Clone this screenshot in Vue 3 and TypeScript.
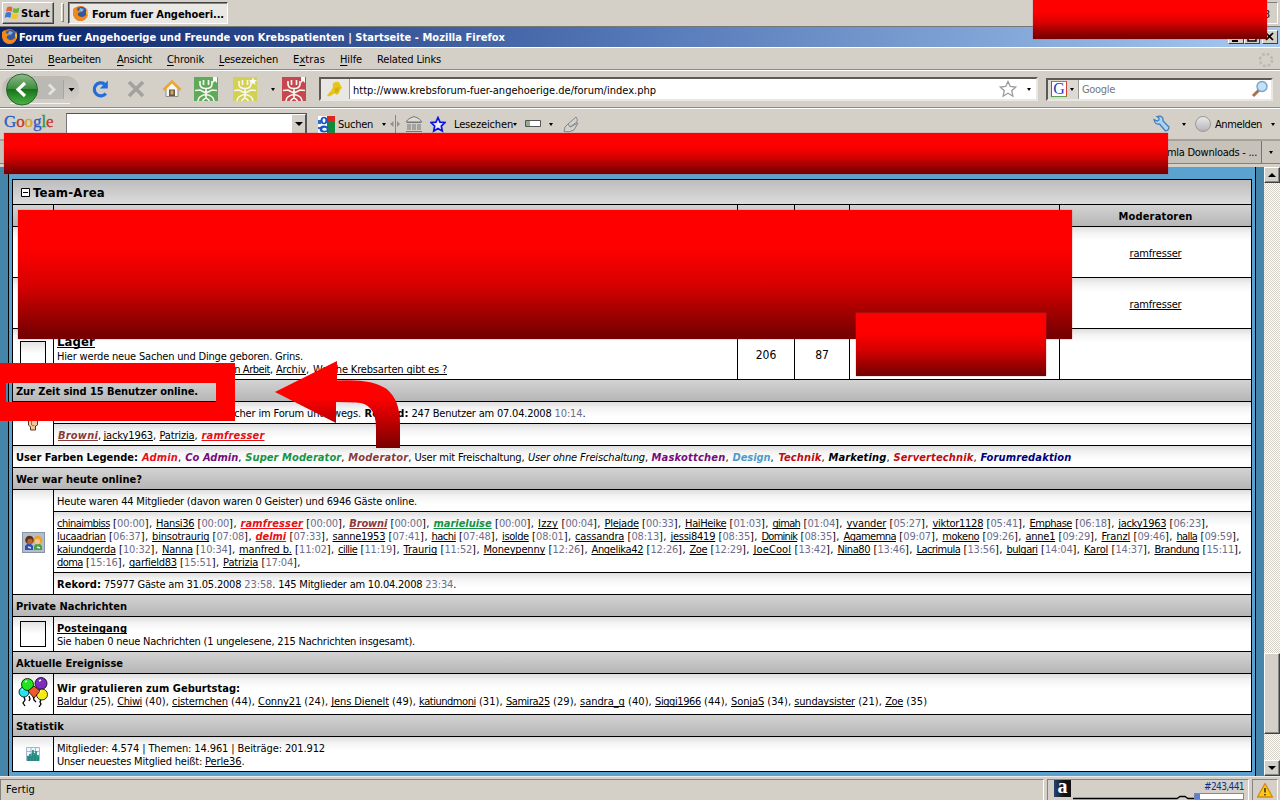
<script setup lang="ts">
import type { Directive } from 'vue'

type Seg = [text: string, width: number, cls?: string]

// Spreads the letters so that a run of text takes exactly the given width.
const vFit: Directive<HTMLElement, number> = {
  mounted(el, binding) {
    const count = (el.textContent || '').length
    if (!count || !binding.value) return
    const range = document.createRange()
    range.selectNodeContents(el)
    const natural = range.getBoundingClientRect().width
    el.style.letterSpacing = `${(binding.value - natural) / count}px`
  },
}

const menu: [string, string, string, number, number][] = [
  ['', 'D', 'atei', 26, 15],
  ['', 'B', 'earbeiten', 53, 16],
  ['', 'A', 'nsicht', 35, 15],
  ['', 'C', 'hronik', 37, 15],
  ['', 'L', 'esezeichen', 59, 15],
  ['E', 'x', 'tras', 32, 15],
  ['', 'H', 'ilfe', 22, 15],
  ['Related Links', '', '', 64, 0],
]

type Entry = [name: string, extra: string, next: number, cls?: string]

// Each entry runs up to the x position where the following one starts.
const stamped = (list: Entry[]): Seg[] => {
  let x = 57.5
  return list.flatMap(([name, time, next, cls]) => {
    const width = next - x - 46.3
    x = next
    return [[name, width, 'lnk ' + (cls || '')], [' [', 7.3], [time, 27.6, 'time'], ['], ', 11.4]] as Seg[]
  })
}
const aged = (list: Entry[]): Seg[] => {
  let x = 57.5
  return list.flatMap(([name, age, next]) => {
    const width = next - x - 30.2
    x = next
    return [[name, width, 'lnk'], [` (${age}), `, 30.2]] as Seg[]
  })
}

const visitors: Seg[][] = [
  stamped([
    ['chinaimbiss', '00:00', 156.6], ['Hansi36', '00:00', 241], ['ramfresser', '00:00', 349.8, 'bi red'],
    ['Browni', '00:00', 434, 'bi brown'], ['marieluise', '00:00', 538.5, 'bi green'], ['Izzy', '00:04', 605],
    ['Plejade', '00:33', 685.6], ['HaiHeike', '01:03', 773], ['gimah', '01:04', 847], ['yvander', '05:27', 933],
    ['viktor1128', '05:41', 1030], ['Emphase', '06:18', 1118.8], ['jacky1963', '06:23', 1213],
  ]),
  stamped([
    ['lucaadrian', '06:37', 152.6], ['binsotraurig', '07:08', 256], ['delmi', '07:33', 333, 'bi red'],
    ['sanne1953', '07:41', 432], ['hachi', '07:48', 502.6], ['isolde', '08:01', 575.6], ['cassandra', '08:13', 671],
    ['jessi8419', '08:35', 762], ['Dominik', '08:35', 844], ['Agamemna', '09:07', 942.8], ['mokeno', '09:26', 1026],
    ['anne1', '09:29', 1102], ['Franzl', '09:46', 1177], ['halla', '09:59', 1244],
  ]),
  stamped([
    ['kaiundgerda', '10:32', 162.5], ['Nanna', '10:34', 239.6], ['manfred b.', '11:02', 338.6], ['cillie', '11:19', 404],
    ['Traurig', '11:52', 484], ['Moneypenny', '12:26', 592], ['Angelika42', '12:26', 690], ['Zoe', '12:29', 754],
    ['JoeCool', '13:42', 838], ['Nina80', '13:46', 917], ['Lacrimula', '13:56', 1007], ['bulgari', '14:04', 1084.5],
    ['Karol', '14:37', 1155], ['Brandung', '15:11', 1246],
  ]),
  stamped([['doma', '15:16', 129.6], ['garfield83', '15:51', 223.6], ['Patrizia', '17:04', 305]]),
]

const birthdays: Seg[] = [
  ...aged([
    ['Baldur', '25', 117.8], ['Chiwi', '40', 172.6], ['cjsternchen', '44', 258.6], ['Conny21', '24', 331.8],
    ['Jens Dienelt', '49', 419.6], ['katiundmoni', '31', 506.4], ['Samira25', '29', 580.5], ['sandra_g', '40', 655.5],
    ['Siggi1966', '44', 731.5], ['SonjaS', '34', 794.8], ['sundaysister', '21', 885.6],
  ]),
  ['Zoe', 18, 'lnk'], [' (35)', 24],
]

const online: Seg[] = [
  ['Browni', 40, 'lnk bi brown'], [', ', 5.5], ['jacky1963', 49.5, 'lnk'], [', ', 6.5], ['Patrizia', 35, 'lnk'],
  [', ', 7], ['ramfresser', 63, 'lnk bi red'],
]
const legend: Seg[] = [
  ['User Farben Legende:', 122, 'b'], [' ', 4], ['Admin', 36, 'bi red'], [', ', 7.3], ['Co Admin', 53, 'bi purple'], [', ', 7],
  ['Super Moderator', 96, 'bi green'], [', ', 7], ['Moderator', 60, 'bi brown'], [', ', 6.2], ['User mit Freischaltung', 107],
  [', ', 6.5], ['User ohne Freischaltung', 117, 'i'], [', ', 6.5], ['Maskottchen', 74, 'bi purple'], [', ', 7], ['Design', 38, 'bi sky'],
  [', ', 8], ['Technik', 43, 'bi crimson'], [', ', 7], ['Marketing', 58, 'bi'], [', ', 7], ['Servertechnik', 80, 'bi crimson'],
  [', ', 7], ['Forumredaktion', 91, 'bi navy'],
]
const record: Seg[] = [
  ['Rekord:', 44, 'b'], [' 75977 Gäste am 31.05.2008 ', 143.3], ['23:58', 28, 'time'],
  ['. 145 Mitglieder am 10.04.2008 ', 153], ['23:34', 28, 'time'], ['.', 3],
]
const current: Seg[] = [
  ['ucher im Forum unterwegs.', 133], [' ', 3.5], ['Rekord:', 44, 'b'], [' 247 Benutzer am 07.04.2008 ', 146],
  ['10:14', 28, 'time'], ['.', 3],
]
const stamps = [
  { cls: 's-green', fill: '#58a755', mark: 'M19 0h4v6l-2-2-2 2z' },
  { cls: 's-yellow', fill: '#d2d24d', mark: 'M20 0l1 3h3l-2.300 2 1 3-2.700-1.800L17.300 8l1-3L16 3h3z' },
  { cls: 's-red', fill: '#c73f49', mark: 'M19 0h4v6l-2-2-2 2z' },
]
</script>

<template>
  <div class="screen">
    <div class="taskbar">
      <div class="start">
        <svg width="17" height="16" viewBox="0 0 17 16"><path d="M3 2.500Q6 .5 8.500 2.500L7.500 7Q4.500 5 2 7z" fill="#e8622c"/><path d="M9.500 3Q12.500 4.500 15.500 2.500L14.500 7.500Q11.500 8.500 8.500 7z" fill="#6fb33a"/><path d="M1.700 8Q4.500 6 7.300 8L6.300 13Q3.300 11 .7 13z" fill="#3c77d4"/><path d="M8.200 8Q11.200 9.500 14.200 8.500L13.200 13.500Q10.200 15 7.200 13z" fill="#f3c42e"/></svg>
        <b v-fit="29">Start</b>
      </div>
      <div class="grip"></div>
      <div class="task">
        <svg class="fox" width="17" height="17" viewBox="0 0 17 17"><circle cx="8.500" cy="8.500" r="7.500" fill="#e06a12"/><circle cx="9.500" cy="7" r="5" fill="#31579f"/><path d="M8 3l4 1-2 3-3-1z" fill="#79b5e6"/><path d="M1 4Q0 15 8 16Q15 16 16 8Q13 13 9 12Q5 11 6 8L9 7L5 5L4 2Q2 3 1 4z" fill="#ee8a1d"/><path d="M15 3Q17 7 15.500 11L14 8z" fill="#f7c23a"/></svg>
        <b v-fit="132">Forum fuer Angehoeri...</b>
      </div>
      <div class="tray">8</div>
    </div>

    <div class="title">
      <svg width="17" height="17" viewBox="0 0 17 17"><circle cx="8.500" cy="8.500" r="7.500" fill="#e06a12"/><circle cx="9.500" cy="7" r="5" fill="#31579f"/><path d="M8 3l4 1-2 3-3-1z" fill="#79b5e6"/><path d="M1 4Q0 15 8 16Q15 16 16 8Q13 13 9 12Q5 11 6 8L9 7L5 5L4 2Q2 3 1 4z" fill="#ee8a1d"/><path d="M15 3Q17 7 15.500 11L14 8z" fill="#f7c23a"/></svg>
      <b v-fit="486">Forum fuer Angehoerige und Freunde von Krebspatienten | Startseite - Mozilla Firefox</b>
      <span class="wins">
        <i><svg width="14" height="14"><path d="M3 10h6" stroke="#000" stroke-width="2"/></svg></i><i><svg width="14" height="14"><path d="M3 3h8v7H3zM3 4h8" fill="none" stroke="#000" stroke-width="1.500"/></svg></i><i class="x"><svg width="14" height="14"><path d="M3 2l7 7M10 2l-7 7" stroke="#000" stroke-width="1.700"/></svg></i>
      </span>
    </div>

    <div class="menubar">
      <span v-for="m in menu" :key="m[0] + m[1]" v-fit="m[3]" :style="{ width: m[3] + 'px', marginRight: m[4] + 'px' }">{{ m[0] }}<u>{{ m[1] }}</u>{{ m[2] }}</span>
      <svg class="throb" width="18" height="18" viewBox="0 0 18 18"><circle cx="9" cy="9" r="6" fill="none" stroke="#bcb9b2" stroke-width="2.600" stroke-dasharray="2.700 2.012"/></svg>
    </div>

    <div class="nav">
      <svg class="history" width="82" height="36" viewBox="0 0 82 36">
        <defs><linearGradient id="gb" x1="0" y1="0" x2="0" y2="1"><stop offset="0" stop-color="#8fb98d"/><stop offset=".48" stop-color="#3d8d3d"/><stop offset=".5" stop-color="#19711b"/><stop offset="1" stop-color="#49b646"/></linearGradient><linearGradient id="pl" x1="0" y1="0" x2="0" y2="1"><stop offset="0" stop-color="#bcb9b2"/><stop offset="1" stop-color="#d3d0c9"/></linearGradient></defs>
        <rect x="2" y="5" width="77" height="27" rx="13" fill="url(#pl)"/><path d="M10 32.500h60" stroke="#f3f2ee"/><path d="M36 8h27v20H36z" fill="#bbb9b3"/><path d="M63.500 9v19" stroke="#a9a69f"/>
        <circle cx="22" cy="18.500" r="15.500" fill="url(#gb)" stroke="#2d6530"/><path d="M25 12l-7 6.500 7 6.500" fill="none" stroke="#fff" stroke-width="3.200"/><path d="M49 13.500l5 5-5 5" fill="none" stroke="#e5e3de" stroke-width="2.800"/><path d="M68.500 17h6l-3 3.500z" fill="#000"/>
      </svg>
      <svg class="ic reload" width="20" height="20" viewBox="0 0 20 20"><path d="M15.800 14.500A6.500 6.500 0 1 1 14.500 5" fill="none" stroke="#1b68d8" stroke-width="3.200"/><path d="M17.800 1.500v8h-8z" fill="#1b68d8"/></svg>
      <svg class="ic stop" width="18" height="18" viewBox="0 0 18 18"><path d="M2 2l14 14M16 2L2 16" stroke="#a09f9b" stroke-width="3.600"/></svg>
      <svg class="ic home" width="20" height="20" viewBox="0 0 20 20"><path d="M4 9v8.500h12V9l-6-6z" fill="#faf9f5" stroke="#8b8b8b"/><path d="M1.500 11L10 2.500l8.500 8.500" fill="none" stroke="#eda42c" stroke-width="2.600"/><path d="M7 10.500h6V17H7z" fill="#5d5147"/><path d="M8.500 11.500h3v4h-3z" fill="#d9a24a"/></svg>
      <template v-for="s in stamps" :key="s.cls">
        <i v-if="s.cls === 's-red'" class="caret stampdrop"></i>
        <svg class="ic" :class="s.cls" width="24" height="24" viewBox="0 0 24 24"><rect width="24" height="24" :fill="s.fill"/><path :d="s.mark" fill="#fff"/><path d="M6 4v3q0 4.500 6 4.500T18 7V4M9.500 3v5M14.500 3v5M12 11v10M1 13.500l5-.5 6 3 6-3 5 .5M4 24q0-5 8-6.500q8 1.500 8 6.500M8.500 24q1-2 3.500-3q2.500 1 3.500 3" fill="none" stroke="#f8faee" stroke-width="1.700"/></svg>
      </template>
      <div class="url">
        <div class="fav"><svg width="20" height="18" viewBox="0 0 20 18"><path d="M2 16Q3 13 6 11L8 7Q7 3 10 2Q14 1 15 4L17 8Q15 9 14 13L12 15Q10 12 7 15Q5 17 2 16z" fill="#e6c51a"/><path d="M10 8l4-1-1 5-3 1z" fill="#d1b010"/></svg></div>
        <span v-fit="303">http://www.krebsforum-fuer-angehoerige.de/forum/index.php</span>
        <svg class="star" width="18" height="18" viewBox="0 0 18 18"><path d="M9 1.500l2.300 5 5.400.5-4 3.700 1.200 5.500L9 13.300l-4.900 2.900 1.200-5.500-4-3.700 5.400-.5z" fill="#fff" stroke="#9b9b9b" stroke-width="1.300"/></svg>
        <i class="caret"></i>
      </div>
      <div class="search">
        <div class="engine"><b>G</b><i class="caret"></i></div>
        <span v-fit="33">Google</span>
        <svg width="18" height="18" viewBox="0 0 18 18"><path d="M2 16l6-6" stroke="#a9714a" stroke-width="3"/><circle cx="11" cy="6.500" r="5" fill="#bfe2f8" stroke="#7ea0c4" stroke-width="1.400"/></svg>
      </div>
    </div>

    <div class="gbar">
      <span class="glogo"><i class="c1">G</i><i class="c2">o</i><i class="c3">o</i><i class="c1">g</i><i class="c4">l</i><i class="c2">e</i></span>
      <div class="combo"><span><i class="caret big"></i></span></div>
      <svg class="g1" width="17" height="17" viewBox="0 0 17 17"><rect width="17" height="17" fill="#fff"/><path d="M9 0h8v6H9z" fill="#e0251b"/><path d="M9 6h8v11H9z" fill="#118a3d"/><path d="M0 4h3v9H0z" fill="#2f6ccb"/><path d="M0 8h8v3H0z" fill="#fff"/><ellipse cx="6" cy="4.500" rx="3.500" ry="3.800" fill="#1858c7"/><ellipse cx="6" cy="13" rx="4.500" ry="3.500" fill="#1858c7"/><ellipse cx="6" cy="4.500" rx="1.400" ry="2.200" fill="#fff"/><ellipse cx="6.500" cy="13.300" rx="2.300" ry="1.500" fill="#fff"/></svg>
      <span v-fit="35" class="g2">Suchen</span><i class="caret g3"></i>
      <svg class="g4" width="10" height="18" viewBox="0 0 10 18"><path d="M5.500 0v18" stroke="#858585"/><path d="M3.500 6v6L0 9zM7 6v6l3-3z" fill="#909090"/></svg>
      <svg class="g5" width="18" height="18" viewBox="0 0 18 18"><path d="M1 7Q3 3 9 1.500Q15 3 17 7zM2 7.500h14M3 9v6M5 9v6M8 9v6M10 9v6M13 9v6M15 9v6M1 16.500h16" fill="#dddbd5" stroke="#777" stroke-width="1"/></svg>
      <svg class="g6" width="16" height="17" viewBox="0 0 16 17"><path d="M8 1.500l2 4.600 5 .5-3.700 3.400 1 5L8 12.500 3.700 15l1-5L1 6.600l5-.5z" fill="#eef" stroke="#0b16e6" stroke-width="1.700"/></svg>
      <span v-fit="59" class="g7">Lesezeichen</span><i class="caret small"></i>
      <svg class="g8" width="16" height="8" viewBox="0 0 16 8"><path d="M.5.5h15v6H.500z" fill="#fff" stroke="#555"/><path d="M1 1h4v5H1z" fill="#8fae94"/></svg><i class="caret g9"></i>
      <svg class="g10" width="17" height="17" viewBox="0 0 17 17"><path d="M1 15.500Q1 10 5 8L13 1Q15 3 14 6L15 7L11 14Q6 17 1 15.500z" fill="#d2d2cf"/><path d="M5 8L13 1Q15 3 14 6L7 11M7 11l8-4-4 7Q6 17 1 15.500Q1 10 5 8z" fill="none" stroke="#85858a"/></svg>
      <svg class="g11" width="17" height="17" viewBox="0 0 17 17"><path d="M1 4.500l3 1.500 2-1V3L4 1.500Q9 0 10 4v2l6 6q0 3.500-3.500 4L6.500 9Q2 10 1 4.500z" fill="#a9d2f3" stroke="#3a7cba" stroke-width="1.200"/></svg><i class="caret g12"></i>
      <i class="ball"></i><span v-fit="47" class="g14">Anmelden</span><i class="caret g15"></i>
    </div>

    <div class="tabs"><div class="tab"><span v-fit="90">mla Downloads - ...</span></div><div class="tabmore"><i class="caret"></i></div></div>

    <div class="view">
      <div class="page">
        <div class="forum">
          <div class="row head team"><svg width="9" height="9" viewBox="0 0 9 9"><path d="M.5.5h8v8h-8z" fill="#fff" stroke="#000"/><path d="M2 4.500h5" stroke="#000"/></svg><span v-fit="72">Team-Area</span></div>
          <div class="row head cols"><i></i><i></i><i></i><i></i><i></i><b v-fit="74">Moderatoren</b></div>
          <div v-for="n in 2" :key="n" class="row body cols tall"><i></i><i></i><i></i><i></i><i></i><span><span v-fit="52" class="lnk">ramfresser</span></span></div>
          <div class="row body cols tall">
            <i><em class="box"></em></i>
            <div class="desc">
              <b v-fit="38" class="lnk lager">Lager</b>
              <span v-fit="246">Hier werde neue Sachen und Dinge geboren. Grins.</span>
              <div class="subs"><span v-fit="38" class="lnk">in Arbeit</span><span v-fit="6">, </span><span v-fit="30" class="lnk">Archiv</span><span v-fit="7">, </span><span v-fit="134" class="lnk">Welche Krebsarten gibt es ?</span></div>
            </div>
            <span class="num">206</span><span class="num">87</span><i></i><i></i>
          </div>
          <div class="row head"><b v-fit="182">Zur Zeit sind 15 Benutzer online.</b></div>
          <div class="group">
            <div class="icon hand"><svg width="12" height="20" viewBox="0 0 12 20"><path d="M1.500 2h9v11l-2 1v4H3.500v-3l-2-2z" fill="#f6c79a" stroke="#5a3520"/><path d="M4.500 9v4l3 1" fill="none" stroke="#a8683c"/></svg></div>
            <div class="stack">
              <div class="row body inner current"><span v-for="(s, i) in current" :key="i" v-fit="s[1]" :class="s[2]">{{ s[0] }}</span></div>
              <div class="row body inner names"><span v-for="(s, i) in online" :key="i" v-fit="s[1]" :class="s[2]">{{ s[0] }}</span></div>
            </div>
          </div>
          <div class="row body inner"><span v-for="(s, i) in legend" :key="i" v-fit="s[1]" :class="s[2]">{{ s[0] }}</span></div>
          <div class="row head"><b v-fit="126">Wer war heute online?</b></div>
          <div class="group">
            <div class="icon"><svg width="23" height="21" viewBox="0 0 23 21"><rect x=".5" y=".5" width="22" height="20" fill="#b6bdc6" stroke="#8794a8"/><path d="M3 18v-4l2-2h4l2 2v4z" fill="#2b4fb8"/><path d="M12 18v-4l2-2h4l2 2v4z" fill="#49a043"/><circle cx="7.500" cy="8" r="4.300" fill="#5b2f1d"/><circle cx="8" cy="9.500" r="2.700" fill="#b5673a"/><circle cx="16" cy="8" r="4.300" fill="#e8a22d"/><circle cx="15.500" cy="9.500" r="2.700" fill="#f3c696"/><path d="M6 15l3 1M15 15l3 1" stroke="#dbe7ff" stroke-width="1.500"/></svg></div>
            <div class="stack">
              <div class="row body inner"><span v-fit="360">Heute waren 44 Mitglieder (davon waren 0 Geister) und 6946 Gäste online.</span></div>
              <div class="row body visitors"><div v-for="(l, k) in visitors" :key="k" class="line"><span v-for="(s, i) in l" :key="i" v-fit="s[1]" :class="s[2]">{{ s[0] }}</span></div></div>
              <div class="row body inner"><span v-for="(s, i) in record" :key="i" v-fit="s[1]" :class="s[2]">{{ s[0] }}</span></div>
            </div>
          </div>
          <div class="row head"><b v-fit="111">Private Nachrichten</b></div>
          <div class="group">
            <div class="icon"><em class="box"></em></div>
            <div class="stack"><div class="row body two pm"><b v-fit="70" class="lnk">Posteingang</b><span v-fit="358">Sie haben 0 neue Nachrichten (1 ungelesene, 215 Nachrichten insgesamt).</span></div></div>
          </div>
          <div class="row head"><b v-fit="107">Aktuelle Ereignisse</b></div>
          <div class="group">
            <div class="icon bal"><svg width="30" height="30" viewBox="0 0 30 30"><path d="M6 20l1 3-2 3 2 3M11 19l1 3-1 2M15 18l1 5 2 2M23 22l-1 3 1 2-2 3" fill="none" stroke="#000" stroke-width="1.300"/><g stroke="#000" stroke-width=".8"><circle cx="6" cy="15" r="5" fill="#1fe6ee"/><circle cx="9.500" cy="7.500" r="6" fill="#21e321"/><circle cx="23" cy="6.500" r="6" fill="#7e2cc0"/><circle cx="24" cy="17.500" r="5.500" fill="#f3ea16"/><path d="M10 14l6-5 6 5-6 7z" fill="#ee5a2b"/></g><path d="M7 5l2-1M21 4l2-1M4 13l1-1M22 15l1-1" stroke="#fff" stroke-width="1.500"/></svg></div>
            <div class="stack"><div class="row body two bday"><b v-fit="183">Wir gratulieren zum Geburtstag:</b><div class="line"><span v-for="(s, i) in birthdays" :key="i" v-fit="s[1]" :class="s[2]">{{ s[0] }}</span></div></div></div>
          </div>
          <div class="row head"><b v-fit="48">Statistik</b></div>
          <div class="group">
            <div class="icon"><svg width="14" height="14" viewBox="0 0 14 14"><path d="M.5.5h13v13H.500zM.5 4.500h13M.5 9h13M5 .5v13M9.500.5v13" fill="#f2f5fb" stroke="#a9b4d0"/><path d="M1 14V9h2V7h2v2h1V3h2v3h1V4h2v4h2v6z" fill="#2f9a8c"/><path d="M3 14V9M6 14V6M9 14V8M12 14V10" stroke="#256d7b"/></svg></div>
            <div class="stack"><div class="row body two stat"><span v-fit="268">Mitglieder: 4.574 | Themen: 14.961 | Beiträge: 201.912</span><div class="line"><span v-fit="148">Unser neuestes Mitglied heißt: </span><span v-fit="36.500" class="lnk">Perle36</span><span>.</span></div></div></div>
          </div>
        </div>
      </div>
      <div class="scroll"><div class="sb up"></div><div class="thumb"></div><div class="sb down"></div></div>
    </div>

    <div class="status">
      <div class="pane grow"><span v-fit="29">Fertig</span></div>
      <div class="pane alexa">
        <b class="a">a</b>
        <svg class="spark" width="122" height="8" viewBox="0 0 122 8"><path d="M0 6.500h104l3-2h5l3 2h7" fill="none" stroke="#000" stroke-width="1.300"/></svg>
        <div class="rank"><span v-fit="40">#243,441</span><em><i></i></em></div>
      </div>
      <div class="pane warn"><svg width="18" height="17" viewBox="0 0 18 17"><path d="M9 1.500l7.500 13.500h-15z" fill="#fbc916" stroke="#d48a12" stroke-width="1.300" stroke-linejoin="round"/><path d="M9 6v4.500M9 12v1.600" stroke="#5a3a00" stroke-width="1.700"/></svg></div>
    </div>

    <div class="mask m-clock"></div>
    <div class="mask m-tabs"></div>
    <div class="mask m-list"></div>
    <div class="mask m-last"></div>
    <div class="frame"></div>
    <svg class="arrow" width="135" height="90" viewBox="0 0 135 90">
      <defs><linearGradient id="ar" x1="0" y1="0" x2="0" y2="1"><stop offset="0" stop-color="#f00"/><stop offset=".42" stop-color="#f00"/><stop offset="1" stop-color="#780000"/></linearGradient></defs>
      <path d="M5 32L67 1v19.500q34-2 49 8q14 11 14 35V88h-24V68q0-25-20-25.500L66 42v21z" fill="url(#ar)"/>
    </svg>
  </div>
</template>

<style>
html, body { margin: 0; overflow: hidden; }
</style>

<style scoped>
* { box-sizing: border-box; }
.screen { position: relative; width: 1280px; height: 800px; overflow: hidden; background: #d4d0c8; color: #000; font: 11px/13px "DejaVu Sans Condensed", "DejaVu Sans", sans-serif; font-stretch: condensed; display: flex; flex-direction: column; white-space: pre; }
svg { display: block; flex: none; }
i { font-style: normal; }
.caret { width: 0; height: 0; flex: none; border: 2.500px solid transparent; border-top: 3px solid #000; border-bottom: 0; }
.caret.big { border-width: 4px 4px 0; }

.taskbar { height: 27px; flex: none; display: flex; align-items: flex-start; padding: 2px 2px 0; border-bottom: 1px solid #777; }
.start { width: 52px; height: 22px; display: flex; align-items: center; padding-left: 1px; border: 1px solid; border-color: #fff #404040 #404040 #fff; box-shadow: inset -1px -1px #888; }
.grip { width: 3px; height: 19px; margin: 1px 0 0 7px; border: 1px solid; border-color: #fff #808080 #808080 #fff; }
.task { width: 160px; height: 22px; margin-left: 4px; display: flex; align-items: center; gap: 2px; padding: 2px 4px 0; border: 1px solid; border-color: #404040 #fff #fff #404040; background: #eae8e4; box-shadow: inset 1px 1px #888; }
.task .fox { margin: -2px 1px 0 -1px; }
.tray { margin-left: auto; width: 60px; height: 22px; padding: 5px 7px; text-align: right; border: 1px solid; border-color: #808080 #fff #fff #808080; }

.title { height: 20px; flex: none; display: flex; align-items: center; gap: 1px; padding-left: 1px; color: #fff; background: linear-gradient(90deg, #0a246a, #5578b8 50%, #a6caf0); }
.title svg { margin-top: -2px; }
.wins { margin-left: auto; display: flex; padding-right: 2px; }
.wins svg { margin-top: 0; }
.wins i { width: 16px; height: 14px; margin-top: -1px; background: #d4d0c8; border: 1px solid; border-color: #fff #404040 #404040 #fff; overflow: hidden; }
.wins .x { margin-left: 2px; }

.menubar { height: 23px; flex: none; display: flex; align-items: center; padding: 2px 0 0 7px; border-top: 1px solid #fff; border-bottom: 1px solid #8b8984; }
.menubar span { flex: none; }
.menubar u { text-underline-offset: 2px; }
.throb { margin-left: auto; margin-right: 5px; }

.nav { height: 38px; flex: none; display: flex; align-items: center; border-top: 1px solid #fff; border-bottom: 1px solid #8b8984; }
.history { width: 82px; }
.reload { margin-left: 8px; }
.stop { margin-left: 17px; }
.home { margin-left: 17px; }
.s-green { margin-left: 12px; }
.s-yellow { margin-left: 15px; }
.stampdrop { margin-left: 14px; }
.s-red { margin-left: 7px; }
.ic { opacity: .95; }
.url { width: 719px; height: 24px; margin-left: 13px; display: flex; align-items: center; background: #fff; border: 2px solid; border-color: #5c5a56 #e9e7e3 #e9e7e3 #5c5a56; }
.url span { margin-top: 2px; }
.fav { width: 29px; height: 20px; padding: 1px 0 0 4px; background: #e9e7e3; border-right: 1px solid #999; margin-right: 3px; flex: none; }
.star { margin-left: auto; margin-right: 10px; }
.url .caret { margin-right: 5px; }
.search { width: 227px; height: 23px; margin-left: 8px; display: flex; align-items: center; background: #fff; border: 2px solid; border-color: #5c5a56 #e9e7e3 #e9e7e3 #5c5a56; color: #777; }
.search span { margin-top: 1px; }
.engine { width: 31px; height: 19px; display: flex; align-items: center; gap: 3px; padding-left: 3px; background: #dddad4; border-right: 1px solid #999; margin-right: 3px; flex: none; }
.engine b { width: 16px; height: 16px; background: #fff; border: 1px solid; border-color: #58a44f #d23f31 #58a44f #3367c8; color: #1b3fc4; font: 16px/14px "Liberation Serif", serif; text-align: center; }
.search > svg { margin-left: auto; margin-right: 2px; }

.gbar { height: 31px; flex: none; display: flex; align-items: center; padding-left: 4px; border-top: 1px solid #fff; }
.gbar > * { flex: none; }
.glogo { width: 62px; font: 17px/20px "Liberation Serif", serif; letter-spacing: -.1px; margin-top: -4px; -webkit-text-stroke: .3px; }
.c1 { color: #2a5bc4; } .c2 { color: #c8362d; } .c3 { color: #d9a520; } .c4 { color: #2d9443; }
.combo { width: 241px; height: 22px; background: #fff; border: 1px solid #555; border-color: #555 #555 #ddd #777; display: flex; justify-content: flex-end; }
.combo span { width: 15px; background: #d4d0c8; display: grid; place-items: center; border: 1px solid; border-color: #fff #555 #555 #fff; }
.g1 { margin-left: 11px; } .g2 { margin-left: 3px; width: 35px; } .g3 { margin-left: 9px; } .g4 { margin-left: 4px; }
.g5 { margin-left: 5px; } .g6 { margin-left: 7px; } .g7 { margin-left: 8px; width: 59px; } .g8 { margin-left: 8px; } .g9 { margin-left: 8px; }
.g10 { margin-left: 10px; } .g11 { margin-left: auto; margin-top: -2px; } .g12 { margin-left: 12px; }
.ball { width: 16px; height: 16px; margin-left: 9px; border-radius: 50%; background: linear-gradient(#e8e8e8, #b5b5b5); border: 1px solid #999; }
.g14 { margin-left: 4px; width: 47px; } .g15 { margin-left: 9px; margin-right: 5px; }

.tabs { height: 28px; flex: none; display: flex; justify-content: flex-end; background: #bfbbb3; border-top: 2px solid #a5a29b; border-bottom: 3px solid #d4d0c8; }
.tab { width: 1262px; display: flex; justify-content: flex-end; align-items: center; padding: 1px 4px 0 0; background: #c6c2ba; border-right: 1px solid #77756f; border-bottom: 1px solid #85827c; }
.tab span { width: 90px; }
.tabmore { width: 18px; display: grid; place-items: center; background: #cbc7bf; border-bottom: 1px solid #85827c; }

.view { height: 609px; flex: none; display: flex; }
.page { flex: 1; background: #4585a9; padding: 0 8px; overflow: hidden; }
.forum { height: 609px; border: solid #000; border-width: 0 1px; background: #5aa2d0; padding: 12px 3px 0; }
.row { border: 1px solid #000; border-bottom: 0; height: 22px; display: flex; align-items: center; padding: 2px 0 0 3px; }
.forum > :last-child { border-bottom: 1px solid #000; }
.head { background: linear-gradient(#d3d3d3, #b6b6b6); }
.body { background: #fff linear-gradient(#dedede, #f3f3f3 6px, #fff 14px) no-repeat; }
.team { height: 25px; padding: 1px 0 0 8px; gap: 3px; font-size: 13px; font-weight: bold; background: linear-gradient(#bdbdbd, #dcdcdc); }
.cols { display: grid; grid-template-columns: 41px 684px 57px 55px 210px 1fr; padding: 0; align-items: stretch; }
.cols > * { border-right: 1px solid #000; }
.cols > :last-child { border-right: 0; display: flex; align-items: center; justify-content: center; padding-top: 2px; }
.cols > i:first-child { display: block; padding: 12px 0 0 7px; }
.tall { height: 51px; }
.desc { padding: 6px 0 0 3px; display: flex; flex-direction: column; align-items: flex-start; }
.lager { font-size: 13px; line-height: 14px; }
.desc > span { margin-top: 1px; }
.subs { padding-left: 175px; }
.num { display: flex; align-items: center; justify-content: center; font-size: 12px; padding-top: 2px; }
.box { display: block; width: 26px; height: 26px; border: 1px solid #000; background: linear-gradient(#e4e4e4, #fff 12px); }
.group { display: grid; grid-template-columns: 41px 1fr; }
.icon { border: solid #000; border-width: 1px 0 0 1px; background: #fff linear-gradient(#e6e6e6, #fff 12px) no-repeat; display: flex; align-items: center; justify-content: center; }
.hand { align-items: flex-start; padding-top: 10px; }
.inner span, .line span { flex: none; }
.current { padding-left: 174px; }
.names { padding-left: 4px; }
.line { display: flex; height: 13px; }
.visitors { height: 61px; display: block; padding-top: 5px; }
.two { display: flex; flex-direction: column; align-items: flex-start; padding-top: 5px; }
.pm { height: 35px; } .bday { height: 41px; padding-top: 8px; } .stat { height: 35px; }
.bal { align-items: flex-start; padding: 3px 0 0 0; }
.lnk { text-decoration: underline; text-decoration-thickness: 1px; text-underline-offset: 1px; text-decoration-skip-ink: none; }
.b { font-weight: bold; } .i { font-style: italic; }
.bi { font-weight: bold; font-style: italic; }
.red { color: #e60f16; } .brown { color: #8b3a3a; } .green { color: #149443; } .purple { color: #760b7c; }
.sky { color: #4f9bcc; } .crimson { color: #c00b10; } .navy { color: #00007c; } .time { color: #6e6e8c; }

.scroll { width: 16px; display: flex; flex-direction: column; background: repeating-conic-gradient(#d4d0c8 0 25%, #fff 0 50%) 0 0 / 2px 2px; }
.sb, .thumb { background: #d4d0c8; border: 1px solid; border-color: #fff #404040 #404040 #fff; box-shadow: inset -1px -1px #888; }
.sb { height: 16px; display: grid; place-items: center; }
.sb::before { content: ""; border: 4px solid transparent; }
.up::before { border-width: 0 4px 4px; border-bottom-color: #000; }
.down::before { border-width: 4px 4px 0; border-top-color: #000; }
.thumb { height: 81px; margin-top: 470px; }
.down { margin-top: auto; }

.status { flex: 1; display: flex; gap: 3px; padding-top: 2px; border-top: 1px solid #eceae6; }
.pane { border: 1px solid; border-color: #85827c #fff #fff #85827c; display: flex; align-items: center; }
.grow { flex: 1; padding: 0 0 2px 5px; }
.alexa { width: 202px; padding-left: 6px; }
.a { width: 17px; height: 17px; background: linear-gradient(90deg, #26436e, #111 60%); color: #fff; font: bold 20px/13px "Liberation Serif", serif; text-align: center; margin-bottom: 3px; }
.spark { margin: 12px 0 0 2px; }
.rank { margin-left: -1px; color: #0b2f8a; font-size: 10px; line-height: 12px; width: 50px; display: flex; flex-direction: column; align-items: flex-end; }
.rank em { width: 50px; height: 7px; border: 1px solid #8388a0; background: #fff; }
.rank i { display: block; width: 5px; height: 5px; background: #5c7fd8; }
.warn { width: 26px; justify-content: center; margin-right: 2px; }

.mask { position: absolute; background: linear-gradient(#f00, #f00 30%, #d80000 58%, #780000 96%); box-shadow: 0 0 1px #d44; }
.m-clock { left: 1033px; top: 0; width: 234px; height: 39px; }
.m-tabs { left: 4px; top: 133px; width: 1164px; height: 41px; }
.m-list { left: 18px; top: 210px; width: 1054px; height: 129px; }
.m-last { left: 856px; top: 313px; width: 190px; height: 63px; }
.frame { position: absolute; left: -14px; top: 363px; width: 249px; height: 58px; border: solid #f00; border-width: 20px 19px 19px 20px; }
.arrow { position: absolute; left: 270px; top: 360px; }
</style>
